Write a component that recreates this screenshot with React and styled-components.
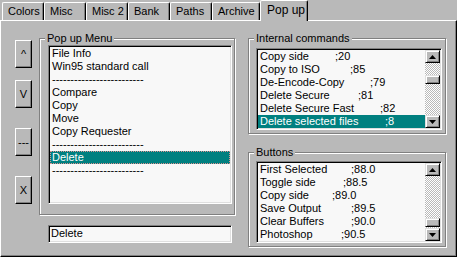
import styled, { createGlobalStyle } from "styled-components";

const GlobalStyle = createGlobalStyle`
  html, body {
    margin: 0;
    padding: 0;
    background: #b9b9b9;
    overflow: hidden;
  }
  body {
    font-family: "Liberation Sans", Arial, sans-serif;
    font-size: 11px;
    color: #000;
  }
`;

const DASH = "-------------------------";

const tabs = [
  { title: "Colors", w: 42 },
  { title: "Misc", w: 42 },
  { title: "Misc 2", w: 42 },
  { title: "Bank", w: 42 },
  { title: "Paths", w: 42 },
  { title: "Archive", w: 48 },
  { title: "Pop up", w: 48, active: true },
];

const sideButtons = [
  { label: "^", top: 0 },
  { label: "V", top: 12 },
  { label: "---", top: 20 },
  { label: "X", top: 20 },
];

const popupItems = [
  "File Info",
  "Win95 standard call",
  DASH,
  "Compare",
  "Copy",
  "Move",
  "Copy Requester",
  DASH,
  "Delete",
  DASH,
];

const internalCommands = [
  { name: "Copy side", value: ";20", w: 75 },
  { name: "Copy to ISO", value: ";85", w: 90 },
  { name: "De-Encode-Copy", value: ";79", w: 110 },
  { name: "Delete Secure", value: ";81", w: 98 },
  { name: "Delete Secure Fast", value: ";82", w: 120 },
  { name: "Delete selected files", value: ";8", w: 125, selected: true },
];

const buttonCommands = [
  { name: "First Selected", value: ";88.0", w: 91 },
  { name: "Toggle side", value: ";88.5", w: 83 },
  { name: "Copy side", value: ";89.0", w: 72 },
  { name: "Save Output", value: ";89.5", w: 91 },
  { name: "Clear Buffers", value: ";90.0", w: 91 },
  { name: "Photoshop", value: ";90.5", w: 81 },
];

function Arrow({ down }) {
  return (
    <svg width="7" height="4" viewBox="0 0 7 4">
      <polygon points={down ? "0,0 7,0 3.5,4" : "3.5,0 7,4 0,4"} fill="#000" />
    </svg>
  );
}

function ScrollBar({ thumbTop }) {
  return (
    <StyledScrollBar>
      <StyledScrollButton><Arrow /></StyledScrollButton>
      <StyledTrack>
        <StyledThumb $top={thumbTop} />
      </StyledTrack>
      <StyledScrollButton><Arrow down /></StyledScrollButton>
    </StyledScrollBar>
  );
}

function CommandList({ items, thumbTop }) {
  return (
    <StyledList $h={82}>
      <StyledItems>
        {items.map((c) => (
          <StyledRow key={c.name} $selected={c.selected}>
            <StyledName $w={c.w}>{c.name}</StyledName>
            {c.value}
          </StyledRow>
        ))}
      </StyledItems>
      <ScrollBar thumbTop={thumbTop} />
    </StyledList>
  );
}

export default function App() {
  return (
    <StyledWindow>
      <GlobalStyle />
      <StyledTabStrip>
        {tabs.map((t) => (
          <StyledTab key={t.title} $w={t.w} $active={t.active}>
            {t.title}
          </StyledTab>
        ))}
      </StyledTabStrip>

      <StyledPage>
        <StyledButtonCol>
          {sideButtons.map((b) => (
            <StyledSideButton key={b.label} $top={b.top}>
              {b.label}
            </StyledSideButton>
          ))}
        </StyledButtonCol>

        <StyledLeftCol>
          <StyledGroup $pad="6px 2px 10px 8px">
            <StyledLegend>Pop up Menu</StyledLegend>
            <StyledList $h={159}>
              <StyledItems>
                {popupItems.map((item, i) => (
                  <StyledRow key={i} $selected={i === 8} $focus={i === 8}>
                    {item}
                  </StyledRow>
                ))}
              </StyledItems>
            </StyledList>
          </StyledGroup>
          <StyledField>Delete</StyledField>
        </StyledLeftCol>

        <StyledRightCol>
          <StyledGroup $pad="9px 3px 3px 7px">
            <StyledLegend>Internal commands</StyledLegend>
            <CommandList items={internalCommands} thumbTop={12} />
          </StyledGroup>
          <StyledGroup $pad="8px 3px 3px 7px" $mt={18}>
            <StyledLegend>Buttons</StyledLegend>
            <CommandList items={buttonCommands} thumbTop={42} />
          </StyledGroup>
        </StyledRightCol>
      </StyledPage>
    </StyledWindow>
  );
}

const StyledWindow = styled.div`
  width: 457px;
  height: 257px;
  display: flex;
  flex-direction: column;
  background: #b9b9b9;
`;

const StyledTabStrip = styled.div`
  height: 20px;
  display: flex;
  align-items: flex-end;
  padding-left: 2px;
  box-sizing: border-box;
`;

const StyledTab = styled.div`
  position: relative;
  box-sizing: border-box;
  width: ${(p) => p.$w}px;
  height: ${(p) => (p.$active ? 21 : 18)}px;
  margin-bottom: ${(p) => (p.$active ? -1 : 0)}px;
  z-index: ${(p) => (p.$active ? 1 : 0)};
  background: #b9b9b9;
  border-top: 1px solid #fff;
  border-left: 1px solid #fff;
  border-right: 1px solid #000;
  border-radius: 2px 2px 0 0;
  box-shadow: inset -1px 0 0 #808080;
  padding-left: ${(p) => (p.$active ? 6 : 5)}px;
  line-height: ${(p) => (p.$active ? 18 : 17)}px;
  font-size: ${(p) => (p.$active ? 12 : 11)}px;
  white-space: nowrap;
`;

const StyledPage = styled.div`
  flex: 1;
  display: flex;
  box-sizing: border-box;
  border-top: 1px solid #fff;
  border-left: 1px solid #fff;
  border-right: 1px solid #000;
  border-bottom: 1px solid #000;
  box-shadow: inset -1px -1px 0 #808080;
  padding: 17px 0 0 14px;
`;

const StyledButtonCol = styled.div`
  width: 17px;
  display: flex;
  flex-direction: column;
  margin-top: 2px;
`;

const StyledSideButton = styled.div`
  box-sizing: border-box;
  width: 17px;
  height: 28px;
  margin-top: ${(p) => p.$top}px;
  display: flex;
  align-items: center;
  justify-content: center;
  border-top: 1px solid #fff;
  border-left: 1px solid #fff;
  border-right: 1px solid #000;
  border-bottom: 1px solid #000;
  box-shadow: inset -1px -1px 0 #808080;
  font-size: 11px;
`;

const StyledLeftCol = styled.div`
  width: 196px;
  margin-left: 7px;
  display: flex;
  flex-direction: column;
`;

const StyledRightCol = styled.div`
  width: 198px;
  margin-left: 13px;
  display: flex;
  flex-direction: column;
`;

const StyledGroup = styled.div`
  position: relative;
  border: 1px solid #808080;
  box-shadow: inset 1px 1px 0 #fff, 1px 1px 0 #fff;
  padding: ${(p) => p.$pad};
  margin-top: ${(p) => p.$mt || 0}px;
`;

const StyledLegend = styled.span`
  position: absolute;
  top: -7px;
  left: 5px;
  padding: 0 2px;
  background: #b9b9b9;
  line-height: 13px;
  white-space: nowrap;
`;

const StyledList = styled.div`
  height: ${(p) => p.$h}px;
  box-sizing: border-box;
  display: flex;
  background: #f8f8f8;
  border: 1px solid;
  border-color: #808080 #fff #fff #808080;
  box-shadow: inset 1px 1px 0 #000, inset -1px -1px 0 #dfdfdf;
  padding: 1px;
  overflow: hidden;
`;

const StyledItems = styled.div`
  flex: 1;
  min-width: 0;
`;

const StyledRow = styled.div`
  height: 13px;
  line-height: 13px;
  padding-left: 2px;
  white-space: nowrap;
  background: ${(p) => (p.$selected ? "#008080" : "transparent")};
  color: ${(p) => (p.$selected ? "#fff" : "#000")};
  outline: ${(p) => (p.$focus ? "1px dotted #e09090" : "none")};
  outline-offset: -1px;
`;

const StyledName = styled.span`
  display: inline-block;
  width: ${(p) => p.$w}px;
`;

const StyledScrollBar = styled.div`
  width: 15px;
  display: flex;
  flex-direction: column;
`;

const StyledScrollButton = styled.div`
  box-sizing: border-box;
  height: 13px;
  display: flex;
  align-items: center;
  justify-content: center;
  background: #b9b9b9;
  border-top: 1px solid #dfdfdf;
  border-left: 1px solid #dfdfdf;
  border-right: 1px solid #000;
  border-bottom: 1px solid #000;
  box-shadow: inset 1px 1px 0 #fff, inset -1px -1px 0 #808080;
`;

const StyledTrack = styled.div`
  flex: 1;
  background: repeating-conic-gradient(#fff 0 25%, #b9b9b9 0 50%) 0 0 / 2px 2px;
`;

const StyledThumb = styled.div`
  box-sizing: border-box;
  height: 9px;
  margin-top: ${(p) => p.$top}px;
  background: #b9b9b9;
  border-top: 1px solid #dfdfdf;
  border-left: 1px solid #dfdfdf;
  border-right: 1px solid #000;
  border-bottom: 1px solid #000;
  box-shadow: inset 1px 1px 0 #fff, inset -1px -1px 0 #808080;
`;

const StyledField = styled.div`
  height: 18px;
  box-sizing: border-box;
  margin: 10px 3px 0 9px;
  background: #f8f8f8;
  border: 1px solid;
  border-color: #808080 #fff #fff #808080;
  box-shadow: inset 1px 1px 0 #000, inset -1px -1px 0 #dfdfdf;
  padding-left: 2px;
  line-height: 15px;
`;
